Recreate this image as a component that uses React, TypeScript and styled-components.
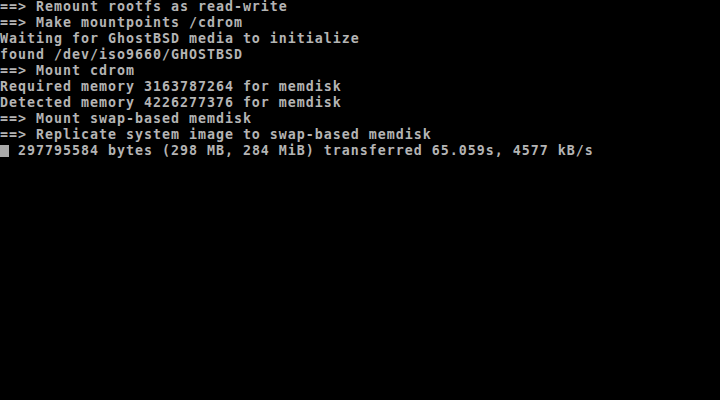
import React from 'react'
import styled, { createGlobalStyle } from 'styled-components'

const Global = createGlobalStyle`
  html, body {
    margin: 0;
    padding: 0;
    background: #000;
    overflow: hidden;
  }
`

const Screen = styled.div`
  width: 720px;
  height: 400px;
  background: #000;
  overflow: hidden;
`

const Console = styled.pre`
  margin: -1px 0 0 0;
  padding: 0;
  font-family: 'DejaVu Sans Mono', 'Liberation Mono', monospace;
  font-size: 13.3px;
  font-weight: bold;
  letter-spacing: 0.99px;
  line-height: 16px;
  color: #b4b4b4;
  white-space: pre;
`

const Cursor = styled.span`
  display: inline-block;
  width: 9px;
  height: 12px;
  background: #aaaaaa;
  vertical-align: -2px;
`

const lines = [
  '==> Remount rootfs as read-write',
  '==> Make mountpoints /cdrom',
  'Waiting for GhostBSD media to initialize',
  'found /dev/iso9660/GHOSTBSD',
  '==> Mount cdrom',
  'Required memory 3163787264 for memdisk',
  'Detected memory 4226277376 for memdisk',
  '==> Mount swap-based memdisk',
  '==> Replicate system image to swap-based memdisk',
]

export default function App() {
  return (
    <Screen>
      <Global />
      <Console>
        {lines.join('\n')}
        {'\n'}
        <Cursor />
        {' 297795584 bytes (298 MB, 284 MiB) transferred 65.059s, 4577 kB/s'}
      </Console>
    </Screen>
  )
}
